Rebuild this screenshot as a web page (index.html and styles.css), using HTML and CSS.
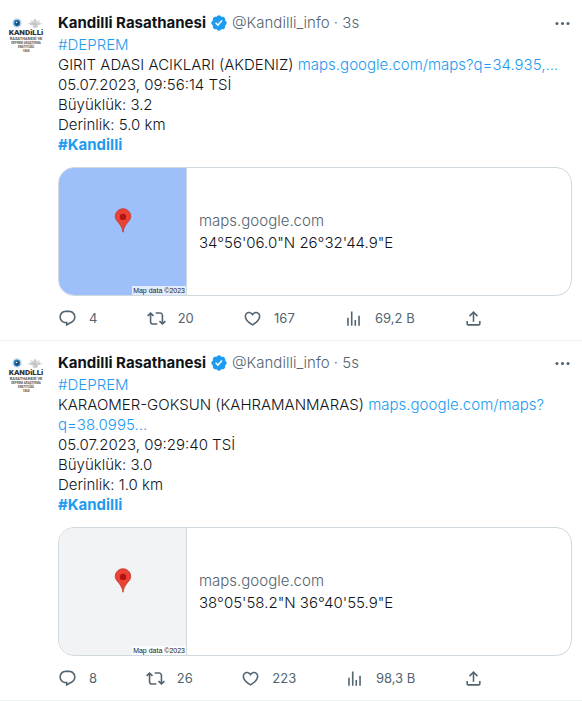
FILE: index.html
```html
<!DOCTYPE html>
<html lang="tr">
<head>
<meta charset="utf-8">
<meta name="viewport" content="width=device-width, initial-scale=1">
<title>Kandilli Rasathanesi</title>
<link rel="stylesheet" href="styles.css">
</head>
<body>
<svg class="sprite" aria-hidden="true">
  <symbol id="reply" viewBox="0 0 24 24"><path d="M1.751 10c0-4.42 3.584-8 8.005-8h4.366c4.49 0 8.129 3.64 8.129 8.13 0 2.96-1.607 5.68-4.196 7.11l-8.054 4.46v-3.69h-.067c-4.49.1-8.183-3.51-8.183-8.01zm8.005-6c-3.317 0-6.005 2.69-6.005 6 0 3.37 2.77 6.08 6.138 6.01l.351-.01h1.761v2.3l5.087-2.81c1.951-1.08 3.163-3.13 3.163-5.36 0-3.39-2.744-6.13-6.129-6.13H9.756z"/></symbol>
  <symbol id="repost" viewBox="0 0 24 24"><path d="M4.5 3.88l4.432 4.14-1.364 1.46L5.5 7.55V16c0 1.1.896 2 2 2H13v2H7.5c-2.209 0-4-1.79-4-4V7.55L1.432 9.48.068 8.02 4.5 3.88zM16.5 6H11V4h5.5c2.209 0 4 1.79 4 4v8.45l2.068-1.93 1.364 1.46-4.432 4.14-4.432-4.14 1.364-1.46 2.068 1.93V8c0-1.1-.896-2-2-2z"/></symbol>
  <symbol id="like" viewBox="0 0 24 24"><path d="M16.697 5.5c-1.222-.06-2.679.51-3.89 2.16l-.805 1.09-.806-1.09C9.984 6.01 8.526 5.44 7.304 5.5c-1.243.07-2.349.78-2.91 1.91-.552 1.12-.633 2.78.479 4.82 1.074 1.97 3.257 4.27 7.129 6.61 3.87-2.34 6.052-4.64 7.126-6.61 1.111-2.04 1.03-3.7.477-4.82-.561-1.13-1.666-1.84-2.908-1.91zm4.187 7.69c-1.351 2.48-4.001 5.12-8.379 7.67l-.503.3-.504-.3c-4.379-2.55-7.029-5.19-8.382-7.67-1.36-2.5-1.41-4.86-.514-6.67.887-1.79 2.647-2.91 4.601-3.01 1.651-.09 3.368.56 4.798 2.01 1.429-1.45 3.146-2.1 4.796-2.01 1.954.1 3.714 1.22 4.601 3.01.896 1.81.846 4.17-.514 6.67z"/></symbol>
  <symbol id="views" viewBox="0 0 24 24"><path d="M8.75 21V3h2v18h-2zM18 21V8.500h2V21h-2zM4 21l.004-10h2L6 21H4zm9.248 0v-7h2v7h-2z"/></symbol>
  <symbol id="share" viewBox="0 0 24 24"><path d="M12 2.59l5.7 5.7-1.41 1.42L13 6.41V16h-2V6.41l-3.3 3.3-1.41-1.42L12 2.59zM21 15l-.02 3.51c0 1.38-1.12 2.49-2.5 2.49H5.5C4.11 21 3 19.88 3 18.5V15h2v3.5c0 .28.22.5.5.5h12.98c.28 0 .5-.22.5-.5L19 15h2z"/></symbol>
  <symbol id="more" viewBox="0 0 24 24"><path d="M3 12c0-1.1.9-2 2-2s2 .9 2 2-.9 2-2 2-2-.9-2-2zm9 2c1.1 0 2-.9 2-2s-.9-2-2-2-2 .9-2 2 .9 2 2 2zm7 0c1.1 0 2-.9 2-2s-.9-2-2-2-2 .9-2 2 .9 2 2 2z"/></symbol>
  <symbol id="verified" viewBox="0 0 22 22"><path d="M20.396 11c-.018-.646-.215-1.275-.57-1.816-.354-.54-.852-.972-1.438-1.246.223-.607.27-1.264.14-1.897-.131-.634-.437-1.218-.882-1.687-.47-.445-1.053-.75-1.687-.882-.633-.13-1.29-.083-1.897.14-.273-.587-.704-1.086-1.245-1.44S11.647 1.62 11 1.604c-.646.017-1.273.213-1.813.568s-.969.854-1.24 1.44c-.608-.223-1.267-.272-1.902-.14-.635.13-1.22.436-1.69.882-.445.47-.749 1.055-.878 1.688-.13.633-.08 1.29.144 1.896-.587.274-1.087.705-1.443 1.245-.356.54-.555 1.17-.574 1.817.02.647.218 1.276.574 1.817.356.54.856.972 1.443 1.245-.224.606-.274 1.263-.144 1.896.13.634.433 1.218.877 1.688.47.443 1.054.747 1.687.878.633.132 1.29.084 1.897-.136.274.586.705 1.084 1.246 1.439.54.354 1.17.551 1.816.569.647-.016 1.276-.213 1.817-.567s.972-.854 1.245-1.44c.604.239 1.266.296 1.903.164.636-.132 1.22-.447 1.68-.907.46-.46.776-1.044.908-1.681s.075-1.299-.165-1.903c.586-.274 1.084-.705 1.439-1.246.354-.54.551-1.17.569-1.816zM9.662 14.85l-3.429-3.428 1.293-1.302 2.072 2.072 4.4-4.794 1.347 1.246z"/></symbol>
  <symbol id="pin" viewBox="0 0 18 26"><path d="M9 25.200C8.300 20.800 6.900 18.500 4.500 15.400 2.600 13 .9 11.500.9 8.800a8.100 8.100 0 0 1 16.200 0c0 2.700-1.700 4.200-3.600 6.600C11.100 18.500 9.700 20.800 9 25.200z" fill="#ea4335" stroke="#c5322b" stroke-width=".8"/><circle cx="9" cy="9.300" r="3.300" fill="#b31412"/></symbol>
  <symbol id="emblems" viewBox="0 0 36 12">
    <circle cx="9" cy="6" r="5" fill="#d9e8f3"/><circle cx="9" cy="6" r="3.400" fill="#2f7fb8"/><path d="M7 5l2-1 2 1v2l-2 2-2-2z" fill="#164a78"/><circle cx="8.500" cy="5.500" r=".8" fill="#fff"/>
    <path d="M27 1l2 3 3-1-1 2 4 2-5 1-1 3h-4l-1-3-5-1 4-2-1-2 3 1z" fill="#dcdcdc"/><path d="M27 3v8M22 7h10M24 5l6 5" stroke="#b0b0b0" stroke-width=".7"/>
  </symbol>
</svg>
<main class="feed">
  <article class="tweet">
    <div class="avatar">
      <svg class="emblems"><use href="#emblems"/></svg>
      <span class="logo-name">KANDiLLi</span>
      <span class="logo-line wide">RASATHANESİ VE</span>
      <span class="logo-line">DEPREM ARAŞTIRMA</span>
      <span class="logo-line">ENSTİTÜSÜ</span>
      <span class="logo-line">1868</span>
    </div>
    <div class="content">
      <header class="head">
        <a class="name" href="#">Kandilli Rasathanesi</a>
        <svg class="badge"><use href="#verified"/></svg>
        <span class="meta">@Kandilli_info · 3s</span>
        <button class="more" aria-label="Daha fazla"><svg class="icon"><use href="#more"/></svg></button>
      </header>
      <p class="text"><a href="#">#DEPREM</a><br>GIRIT ADASI ACIKLARI (AKDENIZ) <a href="#">maps.google.com/maps?q=34.935,...</a><br>05.07.2023, 09:56:14 TSİ<br>Büyüklük: 3.2<br>Derinlik: 5.0 km<br><a class="strong" href="#">#Kandilli</a></p>
      <a class="card" href="#">
        <span class="map sea"><svg class="pin"><use href="#pin"/></svg><small class="credit">Map data ©2023</small></span>
        <span class="place"><span class="domain">maps.google.com</span><span>34°56'06.0"N 26°32'44.9"E</span></span>
      </a>
      <div class="actions">
        <button><svg class="icon"><use href="#reply"/></svg>4</button>
        <button><svg class="icon"><use href="#repost"/></svg>20</button>
        <button><svg class="icon"><use href="#like"/></svg>167</button>
        <button><svg class="icon"><use href="#views"/></svg>69,2 B</button>
        <button aria-label="Paylaş"><svg class="icon"><use href="#share"/></svg></button>
      </div>
    </div>
  </article>
  <article class="tweet">
    <div class="avatar">
      <svg class="emblems"><use href="#emblems"/></svg>
      <span class="logo-name">KANDiLLi</span>
      <span class="logo-line wide">RASATHANESİ VE</span>
      <span class="logo-line">DEPREM ARAŞTIRMA</span>
      <span class="logo-line">ENSTİTÜSÜ</span>
      <span class="logo-line">1868</span>
    </div>
    <div class="content">
      <header class="head">
        <a class="name" href="#">Kandilli Rasathanesi</a>
        <svg class="badge"><use href="#verified"/></svg>
        <span class="meta">@Kandilli_info · 5s</span>
        <button class="more" aria-label="Daha fazla"><svg class="icon"><use href="#more"/></svg></button>
      </header>
      <p class="text"><a href="#">#DEPREM</a><br>KARAOMER-GOKSUN (KAHRAMANMARAS) <a href="#">maps.google.com/maps?<wbr>q=38.0995...</a><br>05.07.2023, 09:29:40 TSİ<br>Büyüklük: 3.0<br>Derinlik: 1.0 km<br><a class="strong" href="#">#Kandilli</a></p>
      <a class="card" href="#">
        <span class="map land"><svg class="pin"><use href="#pin"/></svg><small class="credit">Map data ©2023</small></span>
        <span class="place"><span class="domain">maps.google.com</span><span>38°05'58.2"N 36°40'55.9"E</span></span>
      </a>
      <div class="actions">
        <button><svg class="icon"><use href="#reply"/></svg>8</button>
        <button><svg class="icon"><use href="#repost"/></svg>26</button>
        <button><svg class="icon"><use href="#like"/></svg>223</button>
        <button><svg class="icon"><use href="#views"/></svg>98,3 B</button>
        <button aria-label="Paylaş"><svg class="icon"><use href="#share"/></svg></button>
      </div>
    </div>
  </article>
</main>
</body>
</html>
```

FILE: styles.css
```css
* { box-sizing: border-box; }
body {
  margin: 0;
  background: #fff;
  color: #0f1419;
  font: 300 15px/20px Inter, "Liberation Sans", sans-serif;
}
a { color: #1d9bf0; text-decoration: none; }
button {
  padding: 0;
  border: 0;
  background: none;
  color: inherit;
  font: inherit;
  cursor: pointer;
}
svg { display: block; flex: none; fill: currentColor; }
.sprite { position: absolute; width: 0; height: 0; }
.feed { padding-top: 1px; }
.tweet {
  display: flex;
  gap: 14px;
  padding: 12px 10px 12px 8px;
  border-bottom: 1px solid #eff3f4;
}
.avatar {
  display: flex;
  flex-direction: column;
  align-items: center;
  width: 36px;
  padding-top: 4px;
  color: #555;
  white-space: nowrap;
}
.emblems { width: 36px; height: 12px; }
.logo-name { font: 900 8px/8px Roboto, sans-serif; color: #333; }
.logo-line { font: 700 3px/4px Roboto, sans-serif; }
.logo-line.wide { font-size: 4px; }
.content { flex: 1; min-width: 0; }
.head { display: flex; align-items: center; gap: 4px; margin-bottom: 2px; }
.name { color: #0f1419; font-weight: 700; }
.badge { width: 18px; height: 18px; color: #1d9bf0; }
.meta { color: #536471; }
.icon { width: 19px; height: 19px; }
.more { margin-left: auto; color: #536471; }
.text { margin: 0 0 12px; }
.strong { font-weight: 700; }
.card {
  display: flex;
  overflow: hidden;
  border: 1px solid #cfd9de;
  border-radius: 16px;
  color: #0f1419;
}
.map {
  position: relative;
  display: flex;
  justify-content: center;
  width: 128px;
  height: 127px;
  padding-top: 40px;
  border-right: 1px solid #cfd9de;
}
.sea { background: #9dc0fa; }
.land { background: #f1f3f4; }
.pin { width: 18px; height: 25px; }
.credit {
  position: absolute;
  right: 0;
  bottom: 0;
  padding: 0 1px;
  background: rgba(255, 255, 255, 0.7);
  color: #222;
  font: 7px/9px "Liberation Sans", sans-serif;
}
.place {
  display: flex;
  flex-direction: column;
  justify-content: center;
  gap: 2px;
  padding: 0 12px;
}
.domain { color: #536471; }
.actions {
  display: flex;
  justify-content: space-between;
  max-width: 425px;
  margin-top: 12px;
  color: #536471;
  font-size: 13px;
  font-weight: 400;
}
.actions button { display: flex; align-items: center; gap: 12px; height: 20px; }
```
